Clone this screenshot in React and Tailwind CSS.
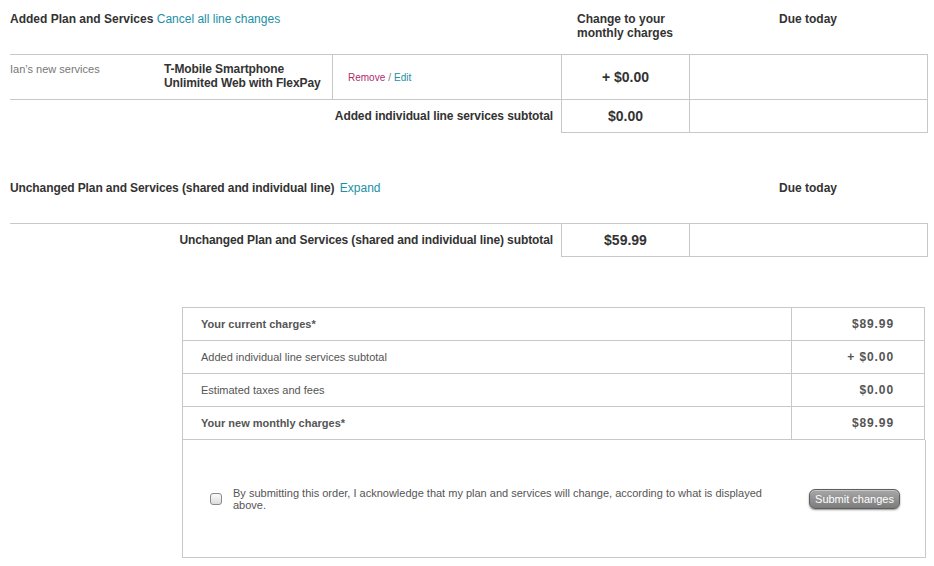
export default function App() {
  const summary = [
    { label: 'Your current charges*', value: '$89.99', bold: true },
    { label: 'Added individual line services subtotal', value: '+ $0.00', bold: false },
    { label: 'Estimated taxes and fees', value: '$0.00', bold: false },
    { label: 'Your new monthly charges*', value: '$89.99', bold: true },
  ];

  return (
    <div className="w-[934px] h-[566px] bg-white text-[#333] font-['Liberation_Sans',Arial,sans-serif] overflow-hidden">
      <div className="pl-[10px] w-[928px]">
        {/* Added plan header */}
        <div className="flex h-[54px] text-[12px] leading-[14px] font-bold">
          <div className="w-[551px] pt-[12px]">
            Added Plan and Services{' '}
            <span className="font-normal text-[#2190a6]">Cancel all line changes</span>
          </div>
          <div className="w-[128px] pl-[16px] pt-[12px]">
            Change to your
            <br />
            monthly charges
          </div>
          <div className="w-[238px] pt-[12px] text-center">Due today</div>
        </div>

        {/* line row */}
        <div className="flex h-[46px] border-t border-b border-[#c8c8c8]">
          <div className="w-[323px] border-r border-[#c8c8c8] flex pt-[7px] leading-[14px]">
            <div className="w-[154px] text-[11px] text-[#777]">Ian’s new services</div>
            <div className="text-[12px] font-bold tracking-[-0.1px]">
              T-Mobile Smartphone
              <br />
              Unlimited Web with FlexPay
            </div>
          </div>
          <div className="w-[229px] border-r border-[#c8c8c8] flex items-center pl-[15px] text-[10px]">
            <span className="text-[#b02d6f]">Remove</span>
            <span className="text-[#777] mx-[3px]">/</span>
            <span className="text-[#2190a6]">Edit</span>
          </div>
          <div className="w-[128px] border-r border-[#c8c8c8] flex items-center justify-center text-[14px] font-bold">
            + $0.00
          </div>
          <div className="w-[238px] border-r border-[#c8c8c8]" />
        </div>
        <div className="flex">
          <div className="w-[551px] h-[32px] flex items-center justify-end pr-[8px] text-[12px] font-bold tracking-[-0.1px]">
            Added individual line services subtotal
          </div>
          <div className="w-[367px] h-[33px] flex border-l border-r border-b border-[#c8c8c8]">
            <div className="w-[128px] border-r border-[#c8c8c8] flex items-center justify-center text-[14px] font-bold">
              $0.00
            </div>
            <div className="flex-1" />
          </div>
        </div>

        {/* Unchanged header */}
        <div className="flex h-[90px] pt-[48px] text-[12px] leading-[14px] font-bold">
          <div className="w-[679px]">
            <span className="tracking-[-0.1px]">Unchanged Plan and Services (shared and individual line)</span>{' '}
            <span className="font-normal text-[#2190a6] ml-[2px]">Expand</span>
          </div>
          <div className="w-[238px] text-center">Due today</div>
        </div>
        <div className="flex border-t border-[#c8c8c8]">
          <div className="w-[551px] h-[32px] flex items-center justify-end pr-[8px] text-[12px] font-bold tracking-[-0.1px]">
            Unchanged Plan and Services (shared and individual line) subtotal
          </div>
          <div className="w-[367px] h-[33px] flex border-l border-r border-b border-[#c8c8c8]">
            <div className="w-[128px] border-r border-[#c8c8c8] flex items-center justify-center text-[14px] font-bold">
              $59.99
            </div>
            <div className="flex-1" />
          </div>
        </div>
      </div>

      {/* Summary */}
      <div className="ml-[182px] mt-[50px] w-[743px] border-t border-l border-r border-[#c8c8c8]">
        {summary.map((row) => (
          <div key={row.label} className="flex h-[33px] border-b border-[#c8c8c8]">
            <div
              className={`w-[609px] border-r border-[#c8c8c8] flex items-center pl-[18px] text-[11px] text-[#555] ${
                row.bold ? 'font-bold' : ''
              }`}
            >
              {row.label}
            </div>
            <div className="flex-1 flex items-center justify-end pr-[30px] text-[12px] font-bold text-[#555] tracking-[0.9px]">
              {row.value}
            </div>
          </div>
        ))}
      </div>
      <div className="ml-[182px] w-[744px] h-[118px] border-l border-r border-b border-[#c8c8c8] flex items-center">
        <div className="ml-[27px] w-[12px] h-[12px] rounded-[3px] border border-[#8a8a8a] bg-gradient-to-b from-[#fafafa] to-[#dcdcdc] shrink-0" />
        <div className="ml-[11px] w-[540px] text-[11px] leading-[12px] text-[#555]">
          By submitting this order, I acknowledge that my plan and services will change, according to what is displayed above.
        </div>
        <button className="ml-auto mr-[25px] w-[91px] h-[20px] rounded-[6px] border border-[#5e5e5e] bg-gradient-to-b from-[#a8a8a8] to-[#7c7c7c] text-white text-[11px] leading-[18px] shadow-[0_1px_2px_rgba(0,0,0,0.45),inset_0_1px_0_rgba(255,255,255,0.35)]">
          Submit changes
        </button>
      </div>
    </div>
  );
}
